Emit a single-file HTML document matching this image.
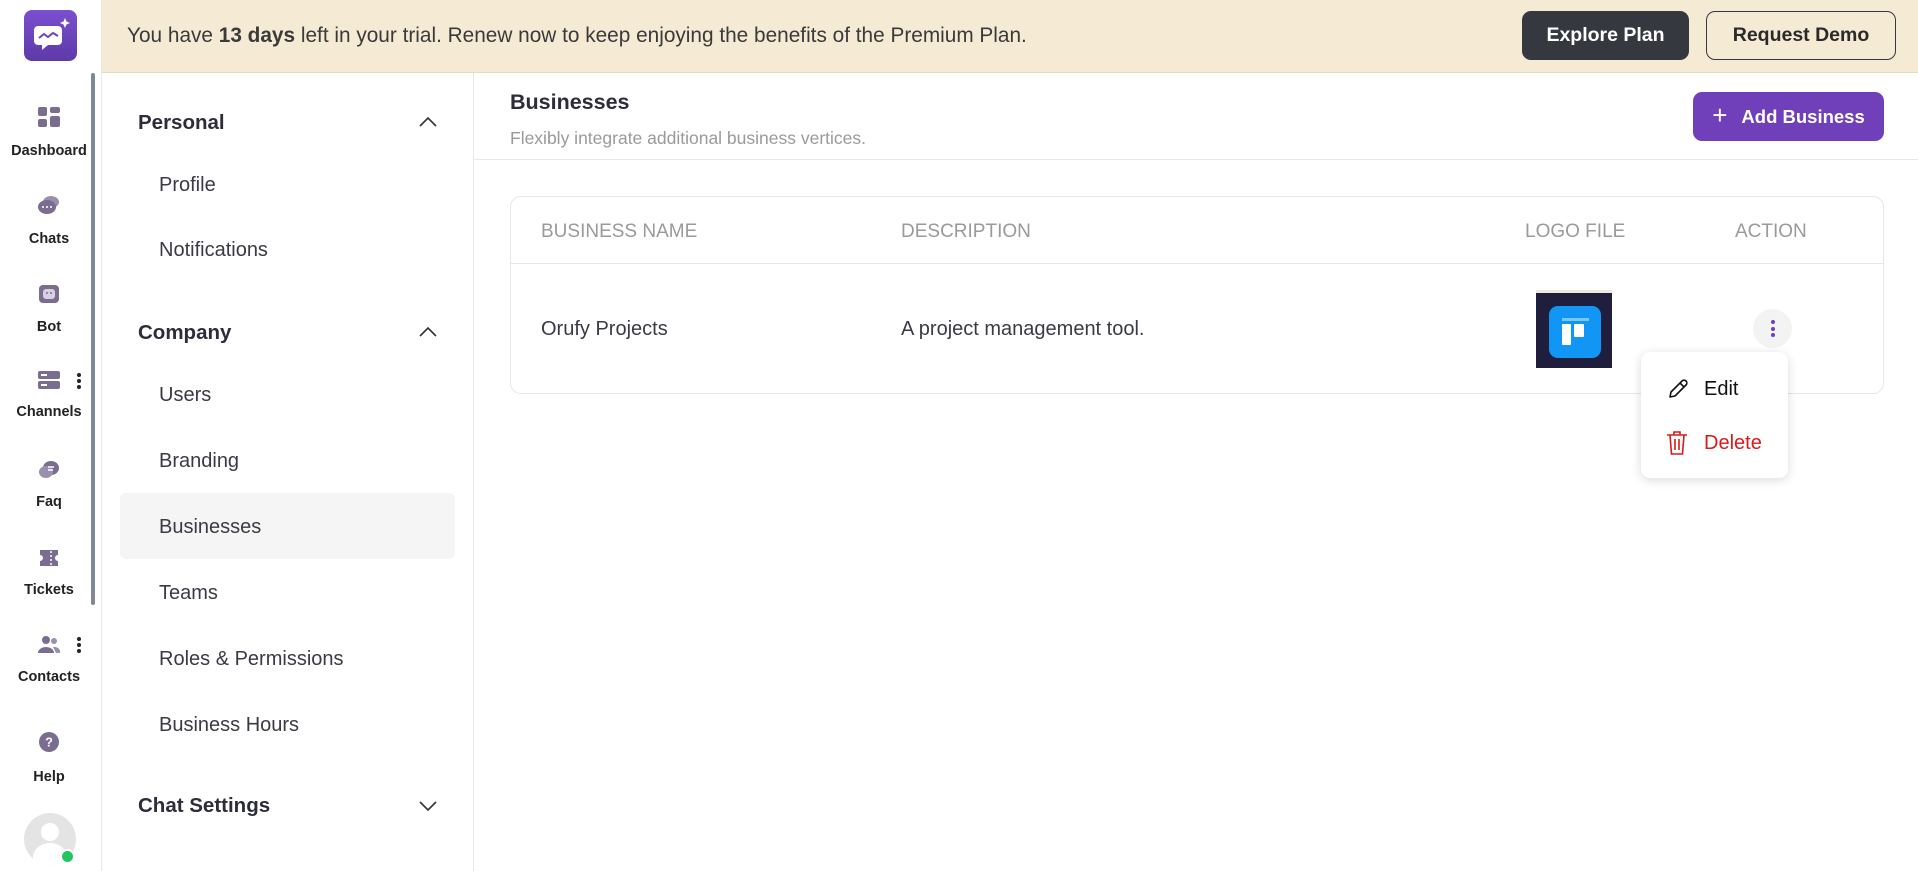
<!DOCTYPE html>
<html><head><meta charset="utf-8"><style>
*{box-sizing:border-box;margin:0;padding:0}
body{width:1918px;height:871px;overflow:hidden;background:#fff;font-family:"Liberation Sans",sans-serif;color:#333;position:relative}
.abs{position:absolute}
.rail{left:0;top:0;width:102px;height:871px;border-right:1px solid #e6e6e6;background:#fff}
.logo{left:24px;top:10px;width:53px;height:51px;border-radius:8px;background:linear-gradient(#7a4fd0,#5e3aa8)}
.ri{position:absolute;left:0;width:98px;text-align:center;font-size:14.5px;font-weight:bold;color:#222}
.ic{position:absolute;width:22px;height:20px;left:38px}
.dots{position:absolute;left:77px;width:4px}
.dots i{display:block;width:4px;height:4px;border-radius:2px;background:#222;margin-bottom:2px}
.banner{left:102px;top:0;width:1816px;height:73px;background:#f5ebd5;border-bottom:1px solid #e8dcc0}
.btn{position:absolute;top:11px;height:49px;border-radius:9px;font-size:19.5px;display:flex;align-items:center;justify-content:center}
.menu{left:102px;top:73px;width:372px;height:798px;border-right:1px solid #e6e6e6}
.mh{position:absolute;left:36px;font-size:20.5px;font-weight:bold;color:#2d2d3a}
.mi{position:absolute;left:57px;font-size:20px;color:#3a3a44}
.chev{position:absolute;left:316px;width:20px;height:12px}
.th{position:absolute;top:221px;font-size:19px;color:#9a9a9a}
</style></head><body>
<div class="abs rail">
 <div class="abs logo"><svg width="53" height="51" viewBox="0 0 53 51"><path d="M14 16h20a4 4 0 0 1 4 4v11a4 4 0 0 1-4 4H24l-6 5v-5h-4a4 4 0 0 1-4-4V20a4 4 0 0 1 4-4z" fill="#fff"/><path d="M15 28l5-4 4 3 5-4 5 3" stroke="#6a45bb" stroke-width="2" fill="none"/><path d="M41 8l1.5 3.5L46 13l-3.5 1.5L41 18l-1.5-3.5L36 13l3.5-1.5z" fill="#fff"/></svg></div>
 <div style="position:absolute;left:91px;top:73px;width:4px;height:532px;background:#7d8898;border-radius:2px"></div>
 <svg class="ic" style="top:107px" viewBox="0 0 22 20"><rect x="0" y="0" width="9" height="9" rx="2" fill="#7a6d8f"/><rect x="12" y="0" width="10" height="6" rx="2" fill="#7a6d8f"/><rect x="0" y="12" width="9" height="8" rx="2" fill="#7a6d8f"/><rect x="12" y="9" width="10" height="11" rx="2" fill="#7a6d8f"/></svg>
 <div class="ri" style="top:143px">Dashboard</div>
 <svg class="ic" style="top:195px" viewBox="0 0 22 20"><ellipse cx="13" cy="7" rx="8" ry="6" fill="#9a8fae"/><ellipse cx="9" cy="12" rx="9" ry="7" fill="#7a6d8f"/><circle cx="5" cy="12" r="1" fill="#fff"/><circle cx="9" cy="12" r="1" fill="#fff"/><circle cx="13" cy="12" r="1" fill="#fff"/></svg>
 <div class="ri" style="top:231px">Chats</div>
 <svg class="ic" style="top:284px" viewBox="0 0 22 20"><rect x="1" y="1" width="20" height="18" rx="4" fill="#7a6d8f"/><rect x="5" y="5" width="12" height="10" rx="3" fill="#d6d0e0"/><circle cx="9" cy="9" r="1" fill="#7a6d8f"/><circle cx="13" cy="9" r="1" fill="#7a6d8f"/></svg>
 <div class="ri" style="top:319px">Bot</div>
 <svg class="ic" style="top:370px" viewBox="0 0 22 20"><rect x="0" y="1" width="22" height="8" rx="2" fill="#7a6d8f"/><rect x="0" y="11" width="22" height="8" rx="2" fill="#7a6d8f"/><rect x="3" y="4" width="6" height="2" fill="#fff"/><rect x="3" y="14" width="6" height="2" fill="#fff"/></svg>
 <div class="dots" style="top:373px"><i></i><i></i><i></i></div>
 <div class="ri" style="top:404px">Channels</div>
 <svg class="ic" style="top:460px" viewBox="0 0 22 20"><ellipse cx="13" cy="8" rx="8" ry="7" fill="#7a6d8f"/><ellipse cx="8" cy="12" rx="7" ry="6" fill="#9a8fae"/><path d="M10 7h6M10 10h5" stroke="#fff" stroke-width="1.5"/></svg>
 <div class="ri" style="top:494px">Faq</div>
 <svg class="ic" style="top:548px" viewBox="0 0 22 20"><path d="M2 2h18v5a3 3 0 0 0 0 6v5H2v-5a3 3 0 0 0 0-6z" fill="#7a6d8f"/><path d="M13 3v14" stroke="#fff" stroke-width="1.5" stroke-dasharray="2 2"/></svg>
 <div class="ri" style="top:582px">Tickets</div>
 <svg class="ic" style="top:635px" viewBox="0 0 22 20"><circle cx="8" cy="5" r="4" fill="#7a6d8f"/><path d="M0 18a8 6 0 0 1 16 0z" fill="#7a6d8f"/><circle cx="16" cy="6" r="3" fill="#9a8fae"/><path d="M15 12a6 5 0 0 1 7 6h-4z" fill="#9a8fae"/></svg>
 <div class="dots" style="top:637px"><i></i><i></i><i></i></div>
 <div class="ri" style="top:669px">Contacts</div>
 <svg class="ic" style="top:732px" viewBox="0 0 22 22"><circle cx="11" cy="11" r="11" fill="#7a6d8f"/><text x="11" y="16" text-anchor="middle" font-size="14" font-weight="bold" fill="#fff" font-family="Liberation Sans">?</text></svg>
 <div class="ri" style="top:769px">Help</div>
 <div style="position:absolute;left:24px;top:813px;width:52px;height:52px;border-radius:50%;background:#e4e4e4;overflow:hidden"><div style="position:absolute;left:17px;top:10px;width:18px;height:18px;border-radius:50%;background:#fff"></div><div style="position:absolute;left:9px;top:30px;width:34px;height:28px;border-radius:50% 50% 0 0;background:#fff"></div></div>
 <div style="position:absolute;left:60px;top:849px;width:15px;height:15px;border-radius:50%;background:#22c55e;border:2px solid #fff"></div>
</div>
<div class="abs banner">
 <div style="position:absolute;left:25px;top:24px;font-size:20.8px;color:#3a3a3a">You have <b>13 days</b> left in your trial. Renew now to keep enjoying the benefits of the Premium Plan.</div>
 <div class="btn" style="left:1420px;width:167px;background:#363840;color:#fff;font-weight:bold">Explore Plan</div>
 <div class="btn" style="left:1604px;width:190px;border:1.5px solid #363840;color:#2a2a2a;font-weight:bold">Request Demo</div>
</div>
<div class="abs menu">
 <div class="mh" style="top:38px">Personal</div>
 <svg class="chev" style="top:43px" viewBox="0 0 20 12"><path d="M2 10l8-8 8 8" stroke="#333" stroke-width="1.6" fill="none"/></svg>
 <div class="mi" style="top:101px">Profile</div>
 <div class="mi" style="top:166px">Notifications</div>
 <div class="mh" style="top:248px">Company</div>
 <svg class="chev" style="top:253px" viewBox="0 0 20 12"><path d="M2 10l8-8 8 8" stroke="#333" stroke-width="1.6" fill="none"/></svg>
 <div class="mi" style="top:311px">Users</div>
 <div class="mi" style="top:377px">Branding</div>
 <div style="position:absolute;left:18px;top:420px;width:335px;height:66px;background:#f5f5f5;border-radius:6px"></div>
 <div class="mi" style="top:443px">Businesses</div>
 <div class="mi" style="top:509px">Teams</div>
 <div class="mi" style="top:575px">Roles &amp; Permissions</div>
 <div class="mi" style="top:641px">Business Hours</div>
 <div class="mh" style="top:721px">Chat Settings</div>
 <svg class="chev" style="top:727px" viewBox="0 0 20 12"><path d="M2 2l8 8 8-8" stroke="#333" stroke-width="1.6" fill="none"/></svg>
</div>
<div class="abs" style="left:474px;top:159px;width:1444px;height:1px;background:#e8e8e8"></div>
<div class="abs" style="left:510px;top:90px;font-size:21.5px;font-weight:bold;color:#2d2d3a">Businesses</div>
<div class="abs" style="left:510px;top:128px;font-size:17.5px;color:#9a9a9a">Flexibly integrate additional business vertices.</div>
<div class="abs" style="left:1693px;top:92px;width:191px;height:49px;border-radius:9px;background:#7040bb;color:#fff;font-size:18.5px;font-weight:bold;display:flex;align-items:center;justify-content:center"><span style="font-weight:normal;font-size:26px;margin-right:14px;margin-top:-3px">+</span>Add Business</div>
<div class="abs" style="left:510px;top:196px;width:1374px;height:198px;border:1px solid #e6e6e6;border-radius:11px"></div>
<div class="abs" style="left:511px;top:263px;width:1372px;height:1px;background:#e6e6e6"></div>
<div class="th" style="left:541px">BUSINESS NAME</div>
<div class="th" style="left:901px">DESCRIPTION</div>
<div class="th" style="left:1525px">LOGO FILE</div>
<div class="th" style="left:1735px">ACTION</div>
<div class="abs" style="left:541px;top:318px;font-size:20px;color:#3a3a44">Orufy Projects</div>
<div class="abs" style="left:901px;top:318px;font-size:20px;color:#3a3a44">A project management tool.</div>
<div class="abs" style="left:1536px;top:290px;width:76px;height:78px;background:#1f1f3d;border-top:3px solid #f0e8da"><div style="position:absolute;left:13px;top:13px;width:52px;height:52px;border-radius:9px;background:#1296f5"><div style="position:absolute;left:13px;top:12px;width:27px;height:3px;background:#7cc6fb"></div><div style="position:absolute;left:13px;top:18px;width:9px;height:21px;background:#fff;border-radius:1px"></div><div style="position:absolute;left:25px;top:18px;width:10px;height:13px;background:#fff;border-radius:1px"></div></div></div>
<div class="abs" style="left:1753px;top:309px;width:39px;height:39px;border-radius:50%;background:#f3f3f3"><div style="position:absolute;left:18px;top:11px;width:4px"><i style="display:block;width:4px;height:4px;border-radius:2px;background:#7040bb;margin-bottom:2.5px"></i><i style="display:block;width:4px;height:4px;border-radius:2px;background:#7040bb;margin-bottom:2.5px"></i><i style="display:block;width:4px;height:4px;border-radius:2px;background:#7040bb"></i></div></div>
<div class="abs" style="left:1641px;top:352px;width:147px;height:126px;background:#fff;border-radius:9px;box-shadow:0 2px 10px rgba(0,0,0,.15)">
 <svg style="position:absolute;left:25px;top:25px" width="24" height="24" viewBox="0 0 24 24"><path d="M4 20l1-5L16 4a2.5 2.5 0 0 1 4 4L9 19z M14 6l4 4" stroke="#111" stroke-width="1.6" fill="none" stroke-linejoin="round"/></svg>
 <div style="position:absolute;left:63px;top:26px;font-size:20px;color:#111">Edit</div>
 <svg style="position:absolute;left:25px;top:78px" width="22" height="26" viewBox="0 0 22 26"><path d="M1 5h20M8 5V2h6v3M4 5l1.5 19h11L18 5M9 9v11M13 9v11" stroke="#d91a1a" stroke-width="1.6" fill="none"/></svg>
 <div style="position:absolute;left:63px;top:80px;font-size:20px;color:#d91a1a">Delete</div>
</div>
</body></html>
